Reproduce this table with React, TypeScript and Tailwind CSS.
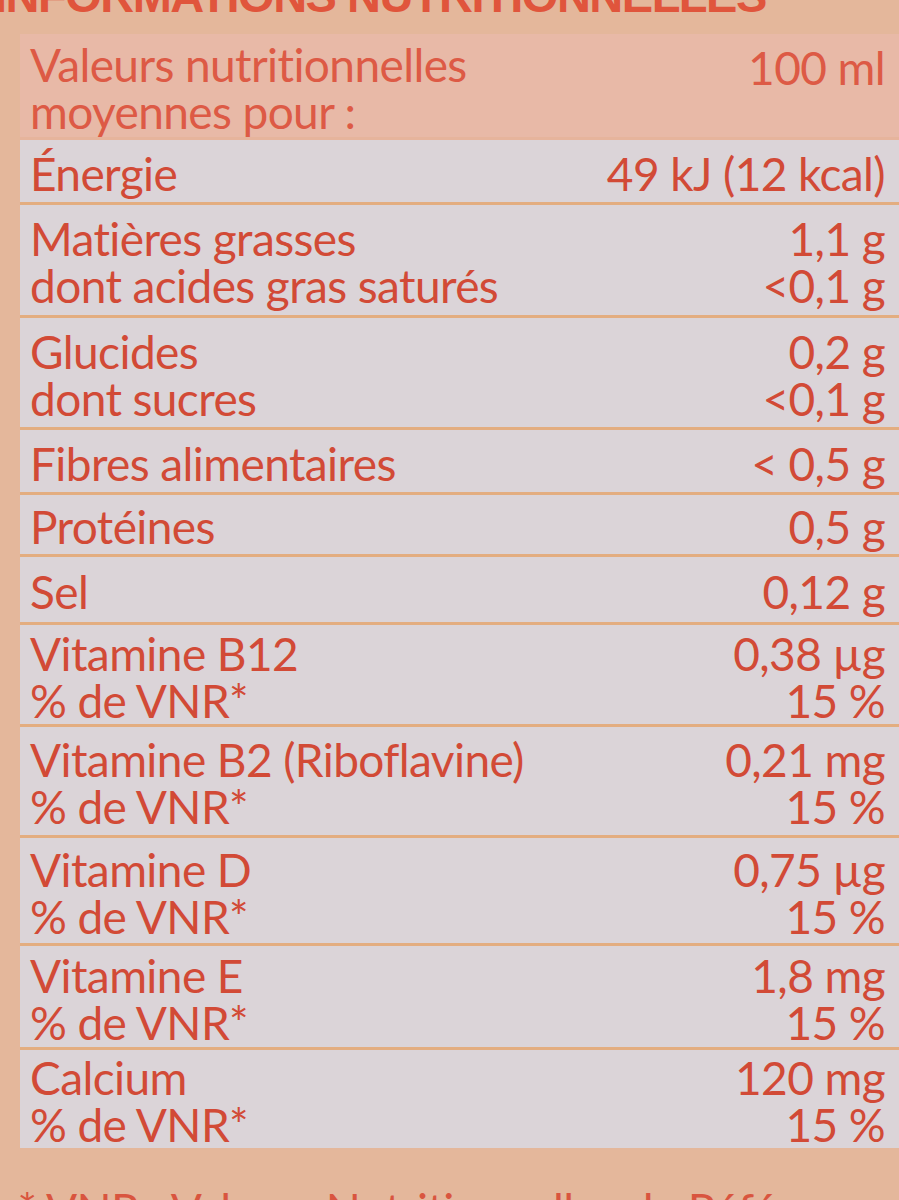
const font = { fontFamily: 'Lato, "Noto Sans", sans-serif' };

type Row = { labels: string[]; values: string[]; h: string };

const rows: Row[] = [
  { labels: ['Énergie'], values: ['49 kJ (12 kcal)'], h: 'h-[65px]' },
  { labels: ['Matières grasses', 'dont acides gras saturés'], values: ['1,1 g', '<0,1 g'], h: 'h-[113px]' },
  { labels: ['Glucides', 'dont sucres'], values: ['0,2 g', '<0,1 g'], h: 'h-[112px]' },
  { labels: ['Fibres alimentaires'], values: ['< 0,5 g'], h: 'h-[65px]' },
  { labels: ['Protéines'], values: ['0,5 g'], h: 'h-[62px]' },
  { labels: ['Sel'], values: ['0,12 g'], h: 'h-[68px]' },
  { labels: ['Vitamine B12', '% de VNR*'], values: ['0,38 µg', '15 %'], h: 'h-[102px]' },
  { labels: ['Vitamine B2 (Riboflavine)', '% de VNR*'], values: ['0,21 mg', '15 %'], h: 'h-[111px]' },
  { labels: ['Vitamine D', '% de VNR*'], values: ['0,75 µg', '15 %'], h: 'h-[108px]' },
  { labels: ['Vitamine E', '% de VNR*'], values: ['1,8 mg', '15 %'], h: 'h-[104px]' },
  { labels: ['Calcium', '% de VNR*'], values: ['120 mg', '15 %'], h: 'h-[98px]' },
];

function NutritionRow({ row, last }: { row: Row; last: boolean }) {
  return (
    <div
      className={`flex shrink-0 items-center justify-between pl-[10px] pr-[14px] pt-[4px] ${row.h} ${
        last ? '' : 'border-b-[3px] border-[#e3ad80]'
      }`}
    >
      <div className="flex flex-col leading-[47px]">
        {row.labels.map((l) => (
          <span key={l}>{l}</span>
        ))}
      </div>
      <div className="flex flex-col items-end leading-[47px]">
        {row.values.map((v) => (
          <span key={v}>{v}</span>
        ))}
      </div>
    </div>
  );
}

export default function App() {
  return (
    <div
      className="flex h-[1200px] w-[899px] flex-col overflow-hidden bg-[#e4b79b] text-[46px] tracking-[-0.6px] text-[#d24a36]"
      style={font}
    >
      <div className="h-[34px] shrink-0 overflow-hidden">
        <div
          className="-mt-[21px] -ml-[6px] whitespace-nowrap text-[47px] font-bold uppercase leading-[34px] tracking-[-1.5px] text-[#e0553c]"
          style={{ fontFamily: '"Liberation Sans", Arial, sans-serif' }}
        >
          Informations nutritionnelles
        </div>
      </div>

      <div className="ml-[20px] flex shrink-0 flex-col bg-[#dbd4d8]">
        <div className="flex h-[106px] shrink-0 items-center justify-between border-b-[3px] border-[#e6b49c] bg-[#e8b9a7] pl-[10px] pr-[14px] pt-[4px] text-[#dd5a45]">
          <div className="flex flex-col leading-[47px]">
            <span>Valeurs nutritionnelles</span>
            <span>moyennes pour :</span>
          </div>
          <span className="self-start pt-[6px] leading-[47px]">100 ml</span>
        </div>
        {rows.map((r, i) => (
          <NutritionRow key={r.labels[0]} row={r} last={i === rows.length - 1} />
        ))}
      </div>

      <div className="mt-[38px] shrink-0 whitespace-nowrap pr-[14px] text-right leading-[47px] text-[#d9553f]">
        * VNR : Valeurs Nutritionnelles de Référence
      </div>
    </div>
  );
}
